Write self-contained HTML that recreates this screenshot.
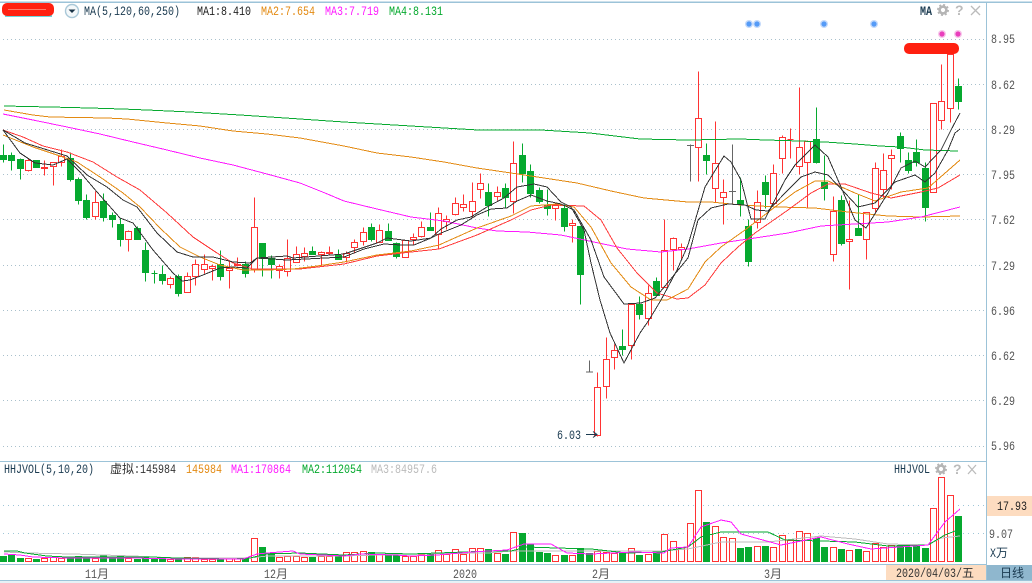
<!DOCTYPE html>
<html><head><meta charset="utf-8"><style>
html,body{margin:0;padding:0;background:#fff;width:1032px;height:583px;overflow:hidden}
svg{display:block}
text{font-family:"Liberation Mono","Noto Sans CJK SC",monospace;font-size:13px}
text.c{font-family:"Liberation Sans","Noto Sans CJK SC",sans-serif;font-size:12px}
</style></head><body>
<svg width="1032" height="583" viewBox="0 0 1032 583" xmlns="http://www.w3.org/2000/svg">
<rect width="1032" height="583" fill="#fff"/>
<rect y="581" width="1032" height="2" fill="#e6f1f6"/>
<!-- grid -->
<g stroke="#a9c0cc" stroke-width="1" stroke-dasharray="1 3" shape-rendering="crispEdges">
<path d="M3 39.5H985M3 84.5H985M3 129.5H985M3 174.5H985M3 219.5H985M3 265.5H985M3 310.5H985M3 355.5H985M3 400.5H985M3 446.5H985"/>
<path d="M3 505.5H985M3 533.5H985" stroke="#9fc6d8" stroke-dasharray="1 4"/>
</g>
<!-- frame -->
<g stroke="#9cc3d8" stroke-width="1" shape-rendering="crispEdges" fill="none">
<path d="M0 2.5H1032M0 461.5H986M986.5 2V580M0 564.5H986M0 580.5H1032"/>
<path d="M0 2H1032"/>
</g>
<rect x="886" y="565" width="100" height="15" fill="#fddcc0"/>
<rect x="987" y="565" width="45" height="15" fill="#8fb7ce"/>
<rect x="987" y="496" width="45" height="20" fill="#fddcc0"/>
<!-- candles -->
<g transform="translate(0,.5)" shape-rendering="crispEdges" stroke-width="1">
<path fill="none" stroke="#ff3333" d="M28.5 158V171M44.5 160V175M53.5 162V185M61.5 149V166M95.5 191V219M128.5 230V251M170.5 276V288M187.5 272V292M195.5 259V285M204.5 254V273M212.5 264V280M229.5 260V288M237.5 257V266M254.5 197V272M279.5 264V278M287.5 239V276M296.5 246V262M304.5 247V261M321.5 251V265M329.5 246V254M346.5 251V262M354.5 239V253M363.5 227V245M379.5 224V242M405.5 240V257M413.5 233V245M421.5 221V237M438.5 207V249M446.5 215V229M455.5 197V215M463.5 194V211M472.5 182V217M480.5 173V198M497.5 186V200M513.5 141V213M555.5 204V220M572.5 219V242M597.5 372V436M606.5 337V398M614.5 344V369M631.5 303V359M648.5 285V325M664.5 219V287M673.5 237V270M681.5 243V259M698.5 71V181M715.5 121V202M723.5 179V224M757.5 190V228M773.5 164V205M782.5 135V173M790.5 128V158M799.5 87V174M807.5 140V208M833.5 196V261M849.5 200V289M866.5 212V259M875.5 162V213M883.5 153V197M891.5 149V189M933.5 103V192M941.5 64V129M950.5 45V122"/>
<path fill="#fff" stroke="#ff3333" d="M28.5 160m-3 0h6V170h-6zM44.5 167m-3 0h6V168h-6zM53.5 162m-3 0h6V166h-6zM61.5 156m-3 0h6V162h-6zM95.5 202m-3 0h6V216h-6zM128.5 231m-3 0h6V239h-6zM170.5 278m-3 0h6V284h-6zM187.5 276m-3 0h6V292h-6zM195.5 264m-3 0h6V276h-6zM204.5 264m-3 0h6V269h-6zM212.5 266m-3 0h6V268h-6zM229.5 268m-3 0h6V270h-6zM237.5 264m-3 0h6V265h-6zM254.5 227m-3 0h6V269h-6zM279.5 266m-3 0h6V270h-6zM287.5 258m-3 0h6V271h-6zM296.5 254m-3 0h6V262h-6zM304.5 253m-3 0h6V256h-6zM321.5 252m-3 0h6V254h-6zM329.5 252m-3 0h6V253h-6zM346.5 253m-3 0h6V257h-6zM354.5 242m-3 0h6V247h-6zM363.5 232m-3 0h6V241h-6zM379.5 230m-3 0h6V242h-6zM405.5 240m-3 0h6V257h-6zM413.5 237m-3 0h6V239h-6zM421.5 227m-3 0h6V236h-6zM438.5 213m-3 0h6V234h-6zM446.5 219m-3 0h6V221h-6zM455.5 203m-3 0h6V214h-6zM463.5 204m-3 0h6V207h-6zM472.5 201m-3 0h6V211h-6zM480.5 183m-3 0h6V189h-6zM497.5 192m-3 0h6V196h-6zM513.5 163m-3 0h6V201h-6zM555.5 205m-3 0h6V208h-6zM572.5 223m-3 0h6V225h-6zM597.5 387m-3 0h6V435h-6zM606.5 359m-3 0h6V386h-6zM614.5 350m-3 0h6V357h-6zM631.5 304m-3 0h6V345h-6zM648.5 293m-3 0h6V318h-6zM664.5 250m-3 0h6V287h-6zM673.5 238m-3 0h6V249h-6zM681.5 247m-3 0h6V249h-6zM698.5 118m-3 0h6V147h-6zM715.5 163m-3 0h6V188h-6zM723.5 192m-3 0h6V197h-6zM757.5 202m-3 0h6V222h-6zM773.5 173m-3 0h6V203h-6zM782.5 137m-3 0h6V158h-6zM790.5 139m-3 0h6V139h-6zM799.5 147m-3 0h6V166h-6zM807.5 141m-3 0h6V162h-6zM833.5 211m-3 0h6V254h-6zM849.5 239m-3 0h6V241h-6zM866.5 212m-3 0h6V239h-6zM875.5 168m-3 0h6V208h-6zM883.5 170m-3 0h6V189h-6zM891.5 155m-3 0h6V158h-6zM933.5 103m-3 0h6V192h-6zM941.5 101m-3 0h6V120h-6zM950.5 54m-3 0h6V108h-6z"/>
<path fill="none" stroke="#06a92f" d="M3.5 144V162M11.5 152V170M20.5 158V179M36.5 160V167M70.5 152V181M78.5 177V204M86.5 194V219M103.5 193V221M112.5 212V227M120.5 218V246M137.5 226V239M145.5 242V281M154.5 270V283M162.5 265V284M178.5 274V296M220.5 250V280M245.5 261V277M262.5 243V276M271.5 255V278M312.5 246V254M338.5 249V259M371.5 223V241M388.5 223V240M396.5 242V258M430.5 212V230M488.5 183V216M505.5 183V207M522.5 143V182M530.5 164V197M539.5 187V203M547.5 189V215M564.5 204V231M580.5 226V304M622.5 329V355M639.5 296V319M656.5 277V295M706.5 143V174M740.5 177V216M748.5 219V266M765.5 175V208M816.5 107V163M824.5 155V200M841.5 195V245M858.5 194V235M900.5 132V162M908.5 152V173M916.5 139V166M925.5 162V221M958.5 78V109"/>
<path fill="#06a92f" stroke="#06a92f" d="M3.5 155m-3 0h6V159h-6zM11.5 155m-3 0h6V160h-6zM20.5 159m-3 0h6V168h-6zM36.5 160m-3 0h6V167h-6zM70.5 158m-3 0h6V179h-6zM78.5 179m-3 0h6V200h-6zM86.5 200m-3 0h6V217h-6zM103.5 201m-3 0h6V217h-6zM112.5 215m-3 0h6V219h-6zM120.5 224m-3 0h6V239h-6zM137.5 228m-3 0h6V239h-6zM145.5 250m-3 0h6V272h-6zM154.5 273m-3 0h6V273h-6zM162.5 274m-3 0h6V280h-6zM178.5 276m-3 0h6V293h-6zM220.5 264m-3 0h6V276h-6zM245.5 264m-3 0h6V273h-6zM262.5 243m-3 0h6V258h-6zM271.5 258m-3 0h6V264h-6zM312.5 251m-3 0h6V254h-6zM338.5 255m-3 0h6V259h-6zM371.5 227m-3 0h6V239h-6zM388.5 231m-3 0h6V240h-6zM396.5 243m-3 0h6V256h-6zM430.5 227m-3 0h6V230h-6zM488.5 192m-3 0h6V205h-6zM505.5 188m-3 0h6V197h-6zM522.5 155m-3 0h6V173h-6zM530.5 171m-3 0h6V193h-6zM539.5 190m-3 0h6V201h-6zM547.5 205m-3 0h6V208h-6zM564.5 208m-3 0h6V226h-6zM580.5 226m-3 0h6V274h-6zM622.5 346m-3 0h6V349h-6zM639.5 304m-3 0h6V314h-6zM656.5 281m-3 0h6V295h-6zM706.5 155m-3 0h6V160h-6zM740.5 200m-3 0h6V204h-6zM748.5 226m-3 0h6V261h-6zM765.5 182m-3 0h6V194h-6zM816.5 139m-3 0h6V162h-6zM824.5 182m-3 0h6V188h-6zM841.5 200m-3 0h6V243h-6zM858.5 228m-3 0h6V235h-6zM900.5 136m-3 0h6V148h-6zM908.5 160m-3 0h6V170h-6zM916.5 152m-3 0h6V162h-6zM925.5 168m-3 0h6V207h-6zM958.5 86m-3 0h6V101h-6z"/>
<path fill="none" stroke="#666" d="M589.5 360V371M586 371.5H593M690.5 144V181M687 145H694M732.5 144V203M729 191H736"/>
</g>
<!-- long MAs + MAs -->
<g fill="none" stroke-width="1" shape-rendering="crispEdges">
<polyline stroke="#06a92f" points="4,106 50,107 90,108 122,109 147,110 190,112 240,115 300,119 344,122 478,130 541,130 590,133 640,139 688,140 740,139 766,140 800,141 825,142 855,144 880,146 900,147 925,150 958,151"/>
<polyline stroke="#e38a12" points="4,110 33,115 50,117 107,118 127,119 167,123 200,126 233,131 267,134 300,138 344,146 377,153 411,157 444,162 477,168 511,173 544,178 577,183 611,191 644,198 688,202 711,202 741,205 778,207 815,208 848,212 888,216 921,217 960,216"/>
<polyline stroke="#ff19ff" points="3,114 33,120 67,127 100,134 133,142 167,150 200,158 233,165 267,174 300,183 325,193 344,201 377,209 411,217 444,221 477,228 497,231 527,232 561,235 594,242 627,249 661,252 688,249 721,243 755,238 788,233 821,226 855,224 888,222 921,217 960,207"/>
<polyline stroke="#ff3b3b" points="3,130 23,137 43,146 67,152 93,162 117,177 140,190 167,213 193,237 217,253 233,263 253,269 267,269 300,269 344,264 377,256 411,252 439,249 477,235 511,220 531,210 551,205 584,206 601,220 617,248 637,273 657,293 677,299 688,298 705,285 721,263 738,247 755,233 788,210 811,193 828,184 845,184 871,193 891,198 921,192 938,188 960,175"/>
<polyline stroke="#e38a12" points="3,135 33,147 60,156 77,162 100,177 123,193 140,207 160,228 180,247 200,257 220,265 243,270 267,270 293,269 317,266 344,262 377,255 411,251 439,245 477,228 511,216 531,206 557,204 574,207 591,227 611,263 631,287 651,300 667,300 688,289 705,262 721,247 745,230 771,210 795,192 815,181 828,181 855,193 875,201 901,192 928,188 960,160"/>
<polyline stroke="#333" points="3,130 20,153 35,163 53,165 67,159 80,172 97,192 120,218 133,223 153,250 173,273 182,281 190,280 203,275 220,268 233,267 247,268 257,258 287,256 293,258 344,254 377,243 387,238 411,241 431,238 441,229 457,220 471,217 487,207 504,198 517,187 534,184 547,187 561,202 571,207 584,230 591,263 600,300 610,333 624,363 640,333 649,320 661,300 677,270 688,245 705,187 724,156 731,162 741,180 751,219 765,219 785,180 795,165 815,145 828,157 841,187 855,220 866,228 888,193 901,168 915,161 925,167 941,150 951,130 960,113"/>
<polyline stroke="#333" points="3,130 25,143 67,156 87,175 107,187 123,200 137,207 157,233 177,252 193,257 213,257 233,262 250,263 257,258 287,260 344,257 364,249 384,244 401,245 414,245 431,238 441,233 461,225 477,215 491,209 507,208 517,201 531,195 547,201 561,204 574,210 591,240 604,277 624,304 641,303 655,298 670,280 688,258 698,220 711,208 728,204 745,205 756,210 768,211 785,193 801,177 815,172 828,175 845,193 858,207 875,203 895,182 915,175 925,182 935,173 948,150 955,133 960,129"/>
</g>
<!-- volume bars -->
<g transform="translate(0,.5)" shape-rendering="crispEdges">
<path fill="#fff" stroke="#ff3333" d="M28.5 558m-3 0h6V561h-6zM44.5 558m-3 0h6V561h-6zM53.5 557m-3 0h6V561h-6zM61.5 558m-3 0h6V561h-6zM95.5 558m-3 0h6V561h-6zM128.5 558m-3 0h6V561h-6zM170.5 559m-3 0h6V561h-6zM187.5 557m-3 0h6V561h-6zM195.5 557m-3 0h6V561h-6zM204.5 559m-3 0h6V561h-6zM212.5 559m-3 0h6V561h-6zM229.5 558m-3 0h6V561h-6zM237.5 558m-3 0h6V561h-6zM254.5 538m-3 0h6V561h-6zM279.5 557m-3 0h6V561h-6zM287.5 556m-3 0h6V561h-6zM296.5 556m-3 0h6V561h-6zM304.5 557m-3 0h6V561h-6zM321.5 556m-3 0h6V561h-6zM329.5 556m-3 0h6V561h-6zM346.5 552m-3 0h6V561h-6zM354.5 552m-3 0h6V561h-6zM363.5 551m-3 0h6V561h-6zM379.5 554m-3 0h6V561h-6zM405.5 556m-3 0h6V561h-6zM413.5 556m-3 0h6V561h-6zM421.5 554m-3 0h6V561h-6zM438.5 550m-3 0h6V561h-6zM446.5 554m-3 0h6V561h-6zM455.5 549m-3 0h6V561h-6zM463.5 554m-3 0h6V561h-6zM472.5 548m-3 0h6V561h-6zM480.5 548m-3 0h6V561h-6zM497.5 553m-3 0h6V561h-6zM513.5 532m-3 0h6V561h-6zM555.5 555m-3 0h6V561h-6zM572.5 555m-3 0h6V561h-6zM597.5 551m-3 0h6V561h-6zM606.5 552m-3 0h6V561h-6zM614.5 553m-3 0h6V561h-6zM631.5 548m-3 0h6V561h-6zM648.5 554m-3 0h6V561h-6zM664.5 534m-3 0h6V561h-6zM673.5 541m-3 0h6V561h-6zM681.5 547m-3 0h6V561h-6zM690.5 523m-3 0h6V561h-6zM698.5 490m-3 0h6V561h-6zM715.5 526m-3 0h6V561h-6zM723.5 537m-3 0h6V561h-6zM732.5 538m-3 0h6V561h-6zM757.5 546m-3 0h6V561h-6zM773.5 547m-3 0h6V561h-6zM782.5 535m-3 0h6V561h-6zM790.5 540m-3 0h6V561h-6zM799.5 531m-3 0h6V561h-6zM807.5 533m-3 0h6V561h-6zM833.5 547m-3 0h6V561h-6zM849.5 550m-3 0h6V561h-6zM866.5 551m-3 0h6V561h-6zM875.5 543m-3 0h6V561h-6zM883.5 547m-3 0h6V561h-6zM891.5 545m-3 0h6V561h-6zM933.5 508m-3 0h6V561h-6zM941.5 477m-3 0h6V561h-6zM950.5 495m-3 0h6V561h-6z"/>
<path fill="#06a92f" stroke="#06a92f" d="M3.5 556m-3 0h6V561h-6zM11.5 554m-3 0h6V561h-6zM20.5 558m-3 0h6V561h-6zM36.5 559m-3 0h6V561h-6zM70.5 557m-3 0h6V561h-6zM78.5 556m-3 0h6V561h-6zM86.5 557m-3 0h6V561h-6zM103.5 555m-3 0h6V561h-6zM112.5 557m-3 0h6V561h-6zM120.5 556m-3 0h6V561h-6zM137.5 559m-3 0h6V561h-6zM145.5 556m-3 0h6V561h-6zM154.5 558m-3 0h6V561h-6zM162.5 559m-3 0h6V561h-6zM178.5 559m-3 0h6V561h-6zM220.5 558m-3 0h6V561h-6zM245.5 558m-3 0h6V561h-6zM262.5 547m-3 0h6V561h-6zM271.5 553m-3 0h6V561h-6zM312.5 557m-3 0h6V561h-6zM338.5 556m-3 0h6V561h-6zM371.5 552m-3 0h6V561h-6zM388.5 553m-3 0h6V561h-6zM396.5 554m-3 0h6V561h-6zM430.5 553m-3 0h6V561h-6zM488.5 549m-3 0h6V561h-6zM505.5 554m-3 0h6V561h-6zM522.5 533m-3 0h6V561h-6zM530.5 544m-3 0h6V561h-6zM539.5 552m-3 0h6V561h-6zM547.5 553m-3 0h6V561h-6zM564.5 555m-3 0h6V561h-6zM580.5 548m-3 0h6V561h-6zM589.5 553m-3 0h6V561h-6zM622.5 553m-3 0h6V561h-6zM639.5 555m-3 0h6V561h-6zM656.5 551m-3 0h6V561h-6zM706.5 522m-3 0h6V561h-6zM740.5 548m-3 0h6V561h-6zM748.5 547m-3 0h6V561h-6zM765.5 546m-3 0h6V561h-6zM816.5 538m-3 0h6V561h-6zM824.5 547m-3 0h6V561h-6zM841.5 549m-3 0h6V561h-6zM858.5 549m-3 0h6V561h-6zM900.5 545m-3 0h6V561h-6zM908.5 547m-3 0h6V561h-6zM916.5 546m-3 0h6V561h-6zM925.5 548m-3 0h6V561h-6zM958.5 516m-3 0h6V561h-6z"/>
</g>
<!-- volume MAs -->
<g fill="none" stroke-width="1" shape-rendering="crispEdges">
<polyline stroke="#bdbdbd" points="4,552 27,553 73,554 133,556 177,558 250,558 267,556 344,556 411,554 488,553 511,551 577,551 660,551 688,549 721,542 768,542 821,536 855,539 888,544 928,545 941,538 960,536"/>
<polyline stroke="#06a92f" points="4,551 17,551 25,553 47,556 67,557 150,557 177,558 233,559 250,558 267,554 300,553 344,555 377,553 411,554 491,551 511,551 527,547 557,548 591,549 627,553 661,552 688,547 701,537 721,532 738,532 768,532 785,540 821,541 855,542 888,546 928,545 945,535 960,529"/>
<polyline stroke="#ff19ff" points="4,554 20,555 33,557 67,558 133,558 177,559 243,559 257,554 267,553 293,551 300,554 344,556 361,554 394,555 411,556 437,555 471,552 507,550 524,544 551,544 567,553 591,554 634,552 664,553 671,548 688,547 701,527 721,520 731,522 741,534 781,545 821,537 848,544 871,549 928,545 945,522 960,509"/>
</g>
<!-- markers -->
<g>
<circle cx="749" cy="24" r="4" fill="#c4dafb"/><circle cx="749" cy="24" r="2.6" fill="#559bf7"/>
<circle cx="757" cy="24" r="4" fill="#c4dafb"/><circle cx="757" cy="24" r="2.6" fill="#559bf7"/>
<circle cx="824" cy="24" r="4" fill="#c4dafb"/><circle cx="824" cy="24" r="2.6" fill="#559bf7"/>
<circle cx="874" cy="24" r="4" fill="#c4dafb"/><circle cx="874" cy="24" r="2.6" fill="#559bf7"/>
<circle cx="942" cy="34" r="4" fill="#f7c6ea"/><circle cx="942" cy="34" r="2.6" fill="#e93fbc"/>
<circle cx="958" cy="34" r="4" fill="#f7c6ea"/><circle cx="958" cy="34" r="2.6" fill="#e93fbc"/>
</g>
<rect x="904" y="43" width="55" height="11" rx="5" fill="#ff2010"/>
<!-- title -->
<rect x="5" y="15" width="47" height="2" fill="#6fd6dc"/>
<rect x="2" y="3" width="52" height="13" rx="5" fill="#ff2010"/>
<path d="M8 9.5H46" stroke="#ff7a6a" stroke-width="1"/>
<circle cx="72" cy="11" r="6.5" fill="#f4f8fa" stroke="#a9c8d8" stroke-width="1.4"/>
<path d="M68.5 9.5h7l-3.5 3.5z" fill="#1a3346"/>
<g fill="#1a3a50">
<text x="84" y="15" textLength="96" lengthAdjust="spacingAndGlyphs">MA(5,120,60,250)</text>
<text x="4" y="473" textLength="90" lengthAdjust="spacingAndGlyphs">HHJVOL(5,10,20)</text>
<text x="557" y="439" textLength="24" lengthAdjust="spacingAndGlyphs">6.03</text>
<text x="920" y="15" textLength="12" lengthAdjust="spacingAndGlyphs" font-weight="bold">MA</text>
<text x="894" y="473" textLength="36" lengthAdjust="spacingAndGlyphs">HHJVOL</text>
</g>
<path d="M586 434.5H597M593 431.5l4 3-4 3" stroke="#1a3a50" fill="none"/>
<text x="197" y="15" fill="#222" textLength="54" lengthAdjust="spacingAndGlyphs">MA1:8.410</text>
<text x="261" y="15" fill="#e38a12" textLength="54" lengthAdjust="spacingAndGlyphs">MA2:7.654</text>
<text x="325" y="15" fill="#ff19ff" textLength="54" lengthAdjust="spacingAndGlyphs">MA3:7.719</text>
<text x="389" y="15" fill="#06a92f" textLength="54" lengthAdjust="spacingAndGlyphs">MA4:8.131</text>
<text x="110" y="473" fill="#333" class="c">虚拟</text>
<text x="134" y="473" fill="#333" textLength="42" lengthAdjust="spacingAndGlyphs">:145984</text>
<text x="186" y="473" fill="#e38a12" textLength="36" lengthAdjust="spacingAndGlyphs">145984</text>
<text x="231" y="473" fill="#ff19ff" textLength="60" lengthAdjust="spacingAndGlyphs">MA1:170864</text>
<text x="302" y="473" fill="#06a92f" textLength="60" lengthAdjust="spacingAndGlyphs">MA2:112054</text>
<text x="371" y="473" fill="#bbb" textLength="66" lengthAdjust="spacingAndGlyphs">MA3:84957.6</text>
<!-- right axis -->
<g fill="#555">
<text x="991" y="43" textLength="24" lengthAdjust="spacingAndGlyphs">8.95</text>
<text x="991" y="89" textLength="24" lengthAdjust="spacingAndGlyphs">8.62</text>
<text x="991" y="134" textLength="24" lengthAdjust="spacingAndGlyphs">8.29</text>
<text x="991" y="179" textLength="24" lengthAdjust="spacingAndGlyphs">7.95</text>
<text x="991" y="224" textLength="24" lengthAdjust="spacingAndGlyphs">7.62</text>
<text x="991" y="270" textLength="24" lengthAdjust="spacingAndGlyphs">7.29</text>
<text x="991" y="315" textLength="24" lengthAdjust="spacingAndGlyphs">6.96</text>
<text x="991" y="360" textLength="24" lengthAdjust="spacingAndGlyphs">6.62</text>
<text x="991" y="405" textLength="24" lengthAdjust="spacingAndGlyphs">6.29</text>
<text x="991" y="450" textLength="24" lengthAdjust="spacingAndGlyphs">5.96</text>
<text x="989" y="538" textLength="24" lengthAdjust="spacingAndGlyphs">9.07</text>
</g>
<text x="997" y="510" fill="#222" textLength="30" lengthAdjust="spacingAndGlyphs">17.93</text>
<text x="990" y="557" fill="#1a3a50" textLength="6" lengthAdjust="spacingAndGlyphs">X</text>
<text x="996" y="557" fill="#1a3a50" class="c">万</text>
<!-- x axis -->
<g fill="#555">
<text x="85" y="578" textLength="12" lengthAdjust="spacingAndGlyphs">11</text><text x="97" y="578" class="c">月</text>
<text x="264" y="578" textLength="12" lengthAdjust="spacingAndGlyphs">12</text><text x="276" y="578" class="c">月</text>
<text x="453" y="578" textLength="24" lengthAdjust="spacingAndGlyphs">2020</text>
<text x="592" y="578" textLength="6" lengthAdjust="spacingAndGlyphs">2</text><text x="598" y="578" class="c">月</text>
<text x="764" y="578" textLength="6" lengthAdjust="spacingAndGlyphs">3</text><text x="770" y="578" class="c">月</text>
</g>
<text x="896" y="577" fill="#333" textLength="66" lengthAdjust="spacingAndGlyphs">2020/04/03/</text>
<text x="962" y="577" fill="#333" class="c">五</text>
<text x="1000" y="577" fill="#1a3a50" class="c">日线</text>
<!-- icons -->
<g>
<circle cx="943" cy="10" r="3.4" fill="none" stroke="#b5b5b5" stroke-width="2.6"/>
<circle cx="943" cy="10" r="5.2" fill="none" stroke="#b5b5b5" stroke-width="1.6" stroke-dasharray="2 2.08"/>
<text x="955" y="15" class="c" style="font-size:14px;font-weight:bold" fill="#bbb">?</text>
<path d="M971 6l9 9M980 6l-9 9" stroke="#bbb" stroke-width="1.3" fill="none"/>
</g>
<g>
<circle cx="941" cy="469" r="3.4" fill="none" stroke="#b5b5b5" stroke-width="2.6"/>
<circle cx="941" cy="469" r="5.2" fill="none" stroke="#b5b5b5" stroke-width="1.6" stroke-dasharray="2 2.08"/>
<text x="953" y="474" class="c" style="font-size:14px;font-weight:bold" fill="#bbb">?</text>
<path d="M968 465l8 9M976 465l-8 9" stroke="#bbb" stroke-width="1.3" fill="none"/>
</g>
</svg>
</body></html>
